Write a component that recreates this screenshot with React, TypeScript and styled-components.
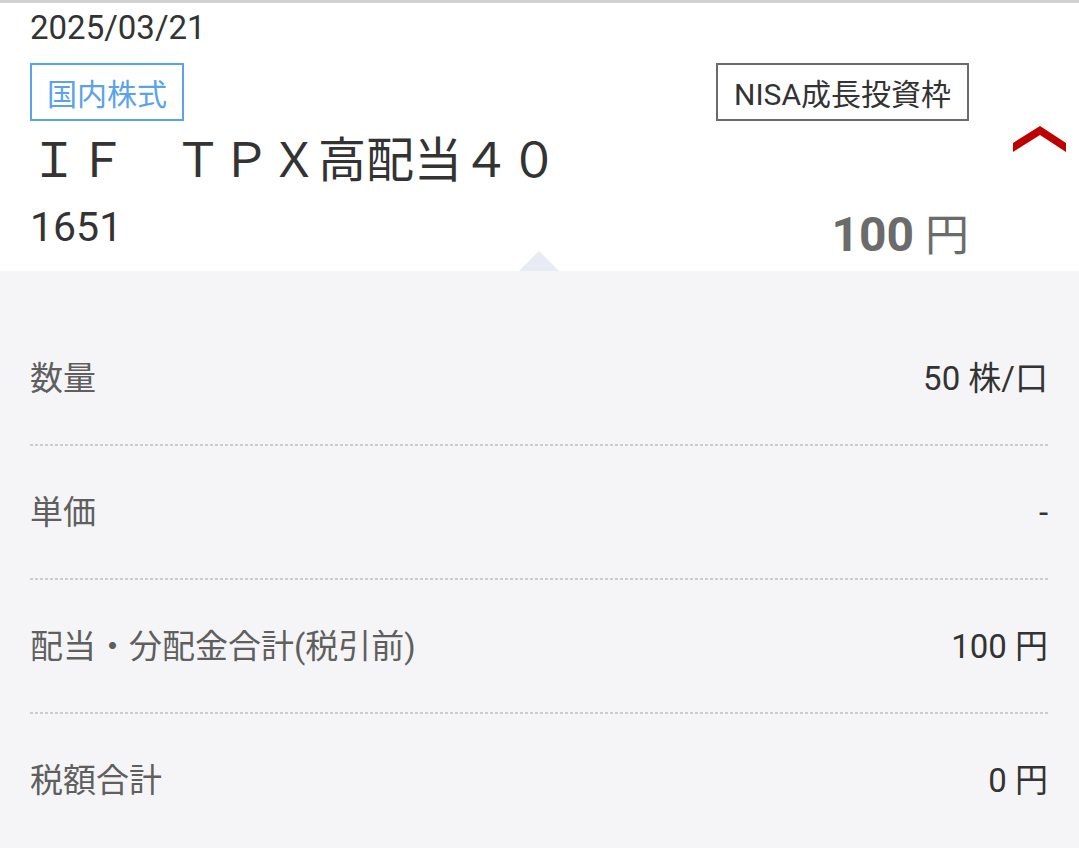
import React from 'react';
import styled, { createGlobalStyle } from 'styled-components';

const GlobalStyle = createGlobalStyle`
  html, body {
    margin: 0;
    padding: 0;
    background: #f5f5f7;
  }
  body {
    font-family: Roboto, "Noto Sans CJK JP", sans-serif;
    color: #333333;
  }
`;

const rows = [
  { label: '数量', value: '50 株/口' },
  { label: '単価', value: '-' },
  { label: '配当・分配金合計(税引前)', value: '100 円' },
  { label: '税額合計', value: '0 円' },
];

const Chevron: React.FC = () => (
  <svg width="53" height="27" viewBox="0 0 53 27">
    <polygon points="0,17 27,0 53,17 53,26 27,9 0,26" fill="#bf0000" />
  </svg>
);

export default function App() {
  return (
    <>
      <GlobalStyle />
      <Page>
        <Header>
          <Main>
            <DateText>2025/03/21</DateText>
            <BadgeRow>
              <Badge tone="blue">国内株式</Badge>
              <Badge tone="gray">NISA成長投資枠</Badge>
            </BadgeRow>
            <Name>ＩＦ　ＴＰＸ高配当４０</Name>
            <CodeRow>
              <Code>1651</Code>
              <Price>
                100<Yen> 円</Yen>
              </Price>
            </CodeRow>
          </Main>
          <Toggle>
            <Chevron />
          </Toggle>
          <Pointer />
        </Header>
        <Panel>
          {rows.map((row, i) => (
            <Row key={row.label} last={i === rows.length - 1}>
              <Label>{row.label}</Label>
              <Value>{row.value}</Value>
            </Row>
          ))}
        </Panel>
      </Page>
    </>
  );
}

const Page = styled.div`
  width: 1079px;
  min-height: 848px;
  background: #f5f5f7;
  border-top: 3px solid #d2d2d2;
  overflow: hidden;
`;

const Header = styled.div`
  position: relative;
  display: flex;
  background: #ffffff;
  height: 268px;
  box-sizing: border-box;
`;

const Main = styled.div`
  flex: 1;
  padding: 9px 0 0 30px;
  display: flex;
  flex-direction: column;
`;

const DateText = styled.div`
  font-size: 33px;
  line-height: 32px;
  color: #333333;
`;

const BadgeRow = styled.div`
  display: flex;
  justify-content: space-between;
  align-items: center;
  margin-top: 19px;
`;

const Badge = styled.div<{ tone: 'blue' | 'gray' }>`
  height: 58px;
  box-sizing: border-box;
  display: flex;
  align-items: center;
  padding: 0 ${(p) => (p.tone === 'blue' ? '15px' : '16px')};
  border: 2px solid ${(p) => (p.tone === 'blue' ? '#5aa3ea' : '#6b6b6b')};
  color: ${(p) => (p.tone === 'blue' ? '#5aa3ea' : '#333333')};
  font-size: 30px;
  white-space: nowrap;
`;

const Name = styled.div`
  margin-top: 11px;
  font-family: "Noto Sans CJK JP", sans-serif;
  font-size: 48px;
  line-height: 48px;
  color: #333333;
  white-space: nowrap;
`;

const CodeRow = styled.div`
  display: flex;
  justify-content: space-between;
  align-items: flex-start;
  margin-top: 27px;
`;

const Code = styled.div`
  font-size: 41px;
  line-height: 41px;
  color: #333333;
`;

const Price = styled.div`
  margin-top: 4px;
  font-size: 48px;
  line-height: 48px;
  font-weight: 700;
  color: #6b6b6b;
  white-space: nowrap;
`;

const Yen = styled.span`
  font-weight: 400;
  font-size: 44px;
`;

const Toggle = styled.div`
  width: 110px;
  box-sizing: border-box;
  display: flex;
  align-items: center;
  justify-content: flex-end;
  padding: 4px 13px 0 0;
`;

const Pointer = styled.div`
  position: absolute;
  left: 519px;
  bottom: 0;
  width: 0;
  height: 0;
  border-left: 20.5px solid transparent;
  border-right: 20.5px solid transparent;
  border-bottom: 20px solid #e7ecf4;
`;

const Panel = styled.div`
  padding: 41px 31px 0 30px;
`;

const Row = styled.div<{ last: boolean }>`
  height: 134px;
  box-sizing: border-box;
  display: flex;
  align-items: center;
  justify-content: space-between;
  background-image: ${(p) =>
    p.last
      ? 'none'
      : 'repeating-linear-gradient(to right, #cccccc 0 3px, transparent 3px 5px)'};
  background-size: 100% 2px;
  background-repeat: no-repeat;
  background-position: bottom left;
`;

const Label = styled.div`
  font-size: 33px;
  line-height: 40px;
  color: #5f5f5f;
`;

const Value = styled.div`
  font-size: 33px;
  line-height: 40px;
  color: #333333;
`;
